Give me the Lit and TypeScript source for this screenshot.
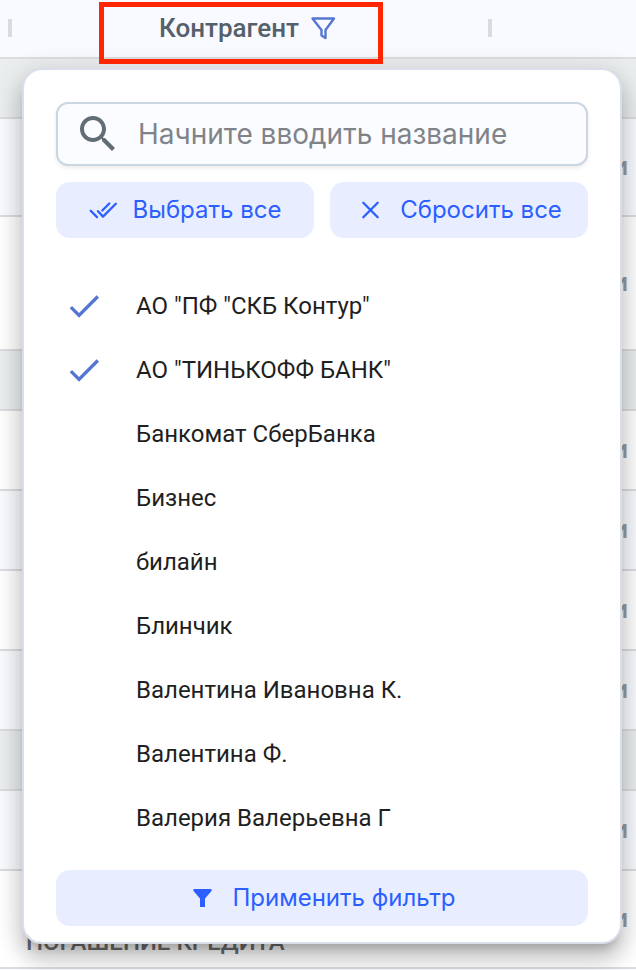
import { LitElement, html, css, svg, nothing } from "lit";
import { customElement, property, state } from "lit/decorators.js";
import { classMap } from "lit/directives/class-map.js";

type RowKind = "group" | "tinted" | "plain";

interface Row {
  kind: RowKind;
  size: "s" | "m" | "l" | "xl";
  purpose?: string;
  tail?: string;
}

const ROWS: Row[] = [
  { kind: "group", size: "s" },
  { kind: "tinted", size: "l", tail: "и" },
  { kind: "plain", size: "xl", tail: "и" },
  { kind: "group", size: "s" },
  { kind: "plain", size: "m", tail: "и" },
  { kind: "tinted", size: "m", tail: "и" },
  { kind: "plain", size: "m", tail: "и" },
  { kind: "tinted", size: "m", tail: "и" },
  { kind: "group", size: "s" },
  { kind: "tinted", size: "m", tail: "и" },
  { kind: "plain", size: "l", purpose: "ПОГАШЕНИЕ КРЕДИТА", tail: "и" },
];

const NAMES = [
  'АО "ПФ "СКБ Контур"',
  'АО "ТИНЬКОФФ БАНК"',
  "Банкомат СберБанка",
  "Бизнес",
  "билайн",
  "Блинчик",
  "Валентина Ивановна К.",
  "Валентина Ф.",
  "Валерия Валерьевна Г",
];

const ICONS = {
  doneAll: svg`<path d="M1.700 14.800l6.300 6.300M9 15.200l5 5.400L26.800 7.700M13.300 14.500l7-7" />`,
  close: svg`<path d="M7.300 6.700l14.400 14.600M21.700 6.700l-14.400 14.600" />`,
  filter: svg`<path class="solid" d="M5.500 5h18v2l-6.500 7.500V23h-5v-8.500L5.500 7z" />`,
};

@customElement("filter-button")
class FilterButton extends LitElement {
  @property() icon: keyof typeof ICONS = "close";
  @property() label = "";

  static styles = css`
    :host {
      display: block;
    }
    .button {
      display: flex;
      align-items: center;
      justify-content: center;
      gap: 16px;
      width: 100%;
      height: 56px;
      padding: 0;
      border: 0;
      border-radius: 14px;
      background: #e8eeff;
      color: #2c5fff;
      font: 24px/32px Inter, sans-serif;
      cursor: pointer;
    }
    .icon {
      width: 28px;
      height: 28px;
      fill: none;
      stroke: currentColor;
      stroke-width: 2.3;
      stroke-linecap: round;
      stroke-linejoin: round;
    }
    .solid {
      fill: currentColor;
      stroke: none;
    }
  `;

  render() {
    return html`<button class="button" type="button">
      <svg class="icon" viewBox="0 0 28 28" aria-hidden="true">${ICONS[this.icon]}</svg>
      <span>${this.label}</span>
    </button>`;
  }
}

@customElement("filter-panel")
class FilterPanel extends LitElement {
  @state() private selected = new Set<string>(NAMES.slice(0, 2));

  static styles = css`
    :host {
      display: block;
      box-sizing: border-box;
      padding: 32px 32px 16px;
      border: 2px solid #dadeea;
      border-radius: 20px;
      background: #fff;
      background-clip: padding-box;
      box-shadow:
        0 10px 10px -6px rgba(0, 0, 0, 0.2),
        0 16px 20px 2px rgba(0, 0, 0, 0.14),
        0 6px 28px 4px rgba(0, 0, 0, 0.12);
    }
    .search {
      display: flex;
      align-items: center;
      gap: 16px;
      box-sizing: border-box;
      height: 64px;
      padding: 0 16px;
      border: 2px solid #cad6e2;
      border-radius: 12px;
      background: #fafcff;
      box-shadow: 0 2px 4px rgba(0, 0, 0, 0.08);
    }
    .glass {
      flex: none;
      width: 48px;
      height: 48px;
      fill: #616c75;
    }
    .query {
      flex: 1;
      min-width: 0;
      padding: 0;
      border: 0;
      outline: 0;
      background: none;
      color: #1f2124;
      font: 28px/40px Inter, sans-serif;
    }
    .query::placeholder {
      color: #808388;
      opacity: 1;
    }
    .actions {
      display: grid;
      grid-template-columns: 1fr 1fr;
      gap: 16px;
      margin: 16px 0 36px;
    }
    .options {
      margin: 0 0 20px;
      padding: 0;
      list-style: none;
    }
    .option {
      display: flex;
      align-items: center;
      gap: 32px;
      height: 64px;
      padding: 0 8px;
      color: #1f1f1f;
      font: 24px/32px Roboto, sans-serif;
      cursor: pointer;
    }
    .mark {
      display: grid;
      flex: none;
      width: 40px;
      height: 40px;
    }
    .box,
    .tick {
      grid-area: 1 / 1;
      width: 40px;
      height: 40px;
      margin: 0;
    }
    .box {
      appearance: none;
      cursor: pointer;
    }
    .tick {
      fill: #5676d3;
      pointer-events: none;
    }
  `;

  private toggle(name: string) {
    const next = new Set(this.selected);
    if (!next.delete(name)) next.add(name);
    this.selected = next;
  }

  render() {
    return html`
      <label class="search">
        <svg class="glass" viewBox="0 0 24 24" aria-hidden="true">
          <path
            d="M15.5 14h-.79l-.28-.27C15.410 12.590 16 11.110 16 9.500 16 5.910 13.090 3 9.500 3S3 5.910 3 9.500 5.910 16 9.500 16c1.610 0 3.090-.59 4.230-1.570l.27.28v.79l5 4.990L20.490 19l-4.990-5zm-6 0C7.010 14 5 11.990 5 9.500S7.010 5 9.500 5 14 7.010 14 9.500 11.990 14 9.500 14z"
          />
        </svg>
        <input class="query" type="text" aria-label="Поиск" placeholder="Начните вводить название" />
      </label>
      <div class="actions">
        <filter-button
          icon="doneAll"
          label="Выбрать все"
          @click=${() => (this.selected = new Set(NAMES))}
        ></filter-button>
        <filter-button
          icon="close"
          label="Сбросить все"
          @click=${() => (this.selected = new Set())}
        ></filter-button>
      </div>
      <ul class="options">
        ${NAMES.map(
          (name) => html`<li>
            <label class="option">
              <span class="mark">
                <input
                  class="box"
                  type="checkbox"
                  .checked=${this.selected.has(name)}
                  @change=${() => this.toggle(name)}
                />
                ${this.selected.has(name)
                  ? html`<svg class="tick" viewBox="0 0 24 24" aria-hidden="true">
                      <path d="M9 16.170L4.830 12l-1.420 1.410L9 19 21 7l-1.410-1.410z" />
                    </svg>`
                  : nothing}
              </span>
              <span>${name}</span>
            </label>
          </li>`
        )}
      </ul>
      <filter-button icon="filter" label="Применить фильтр"></filter-button>
    `;
  }
}

@customElement("app-root")
class AppRoot extends LitElement {
  static styles = css`
    :host {
      display: block;
      position: relative;
      min-height: 100vh;
      overflow: hidden;
      background: #f9faff;
      font-family: Roboto, sans-serif;
    }
    .table {
      width: 100%;
      table-layout: fixed;
      border-collapse: separate;
      border-spacing: 0;
    }
    .col-edge {
      width: 10px;
    }
    .col-main {
      width: 480px;
    }
    th,
    td {
      box-sizing: border-box;
      padding: 0;
      border-bottom: 2px solid #dcdde0;
    }
    th {
      position: relative;
      height: 59px;
      background: #f9faff;
      color: #55606a;
      font-size: 26px;
      line-height: 30px;
      font-weight: 500;
    }
    .title {
      display: flex;
      align-items: center;
      justify-content: center;
      gap: 10px;
      padding: 0 4px 2px 0;
    }
    .funnel {
      width: 28px;
      height: 28px;
      fill: none;
      stroke: #5676d3;
      stroke-width: 2.4;
      stroke-linejoin: round;
    }
    .handle {
      position: absolute;
      z-index: 1;
      top: 19px;
      right: -2px;
      width: 4px;
      height: 18px;
      background: #dadbde;
    }
    .frame {
      position: absolute;
      z-index: 3;
      top: 2px;
      left: 99px;
      box-sizing: border-box;
      width: 284px;
      height: 62px;
      border: 5px solid #ff2600;
      pointer-events: none;
    }
    .s td {
      height: 60px;
    }
    .m td {
      height: 80px;
    }
    .l td {
      height: 98px;
    }
    .xl td {
      height: 134px;
    }
    .group td {
      background: #eaeeee;
    }
    .tinted td {
      background: #f9fbff;
    }
    .plain td {
      background: #fff;
    }
    .purpose {
      padding: 0 16px 12px;
      color: #6e6e6e;
      font-size: 24px;
      line-height: 26px;
      font-weight: 500;
      vertical-align: bottom;
      white-space: nowrap;
    }
    .tail {
      padding: 0 8px 2px 0;
      color: #9a9a9a;
      font-size: 26px;
      line-height: 32px;
      font-weight: 500;
      text-align: right;
    }
    .panel {
      position: absolute;
      z-index: 2;
      top: 68px;
      left: 22px;
      right: 14px;
    }
  `;

  render() {
    return html`
      <table class="table">
        <colgroup>
          <col class="col-edge" />
          <col class="col-main" />
          <col />
        </colgroup>
        <thead>
          <tr>
            <th><span class="handle"></span></th>
            <th scope="col">
              <div class="title">
                <span>Контрагент</span>
                <svg class="funnel" viewBox="0 0 28 28" aria-hidden="true">
                  <path d="M3.500 4.500h21.500l-8.500 11.500V24l-4-2.500v-5.500z" />
                </svg>
              </div>
              <span class="handle"></span>
            </th>
            <th></th>
          </tr>
        </thead>
        <tbody>
          ${ROWS.map(
            (row) => html`<tr class=${classMap({ [row.kind]: true, [row.size]: true })}>
              <td></td>
              <td class="purpose">${row.purpose ?? nothing}</td>
              <td class="tail">${row.tail ?? nothing}</td>
            </tr>`
          )}
        </tbody>
      </table>
      <div class="frame"></div>
      <filter-panel class="panel"></filter-panel>
    `;
  }
}
